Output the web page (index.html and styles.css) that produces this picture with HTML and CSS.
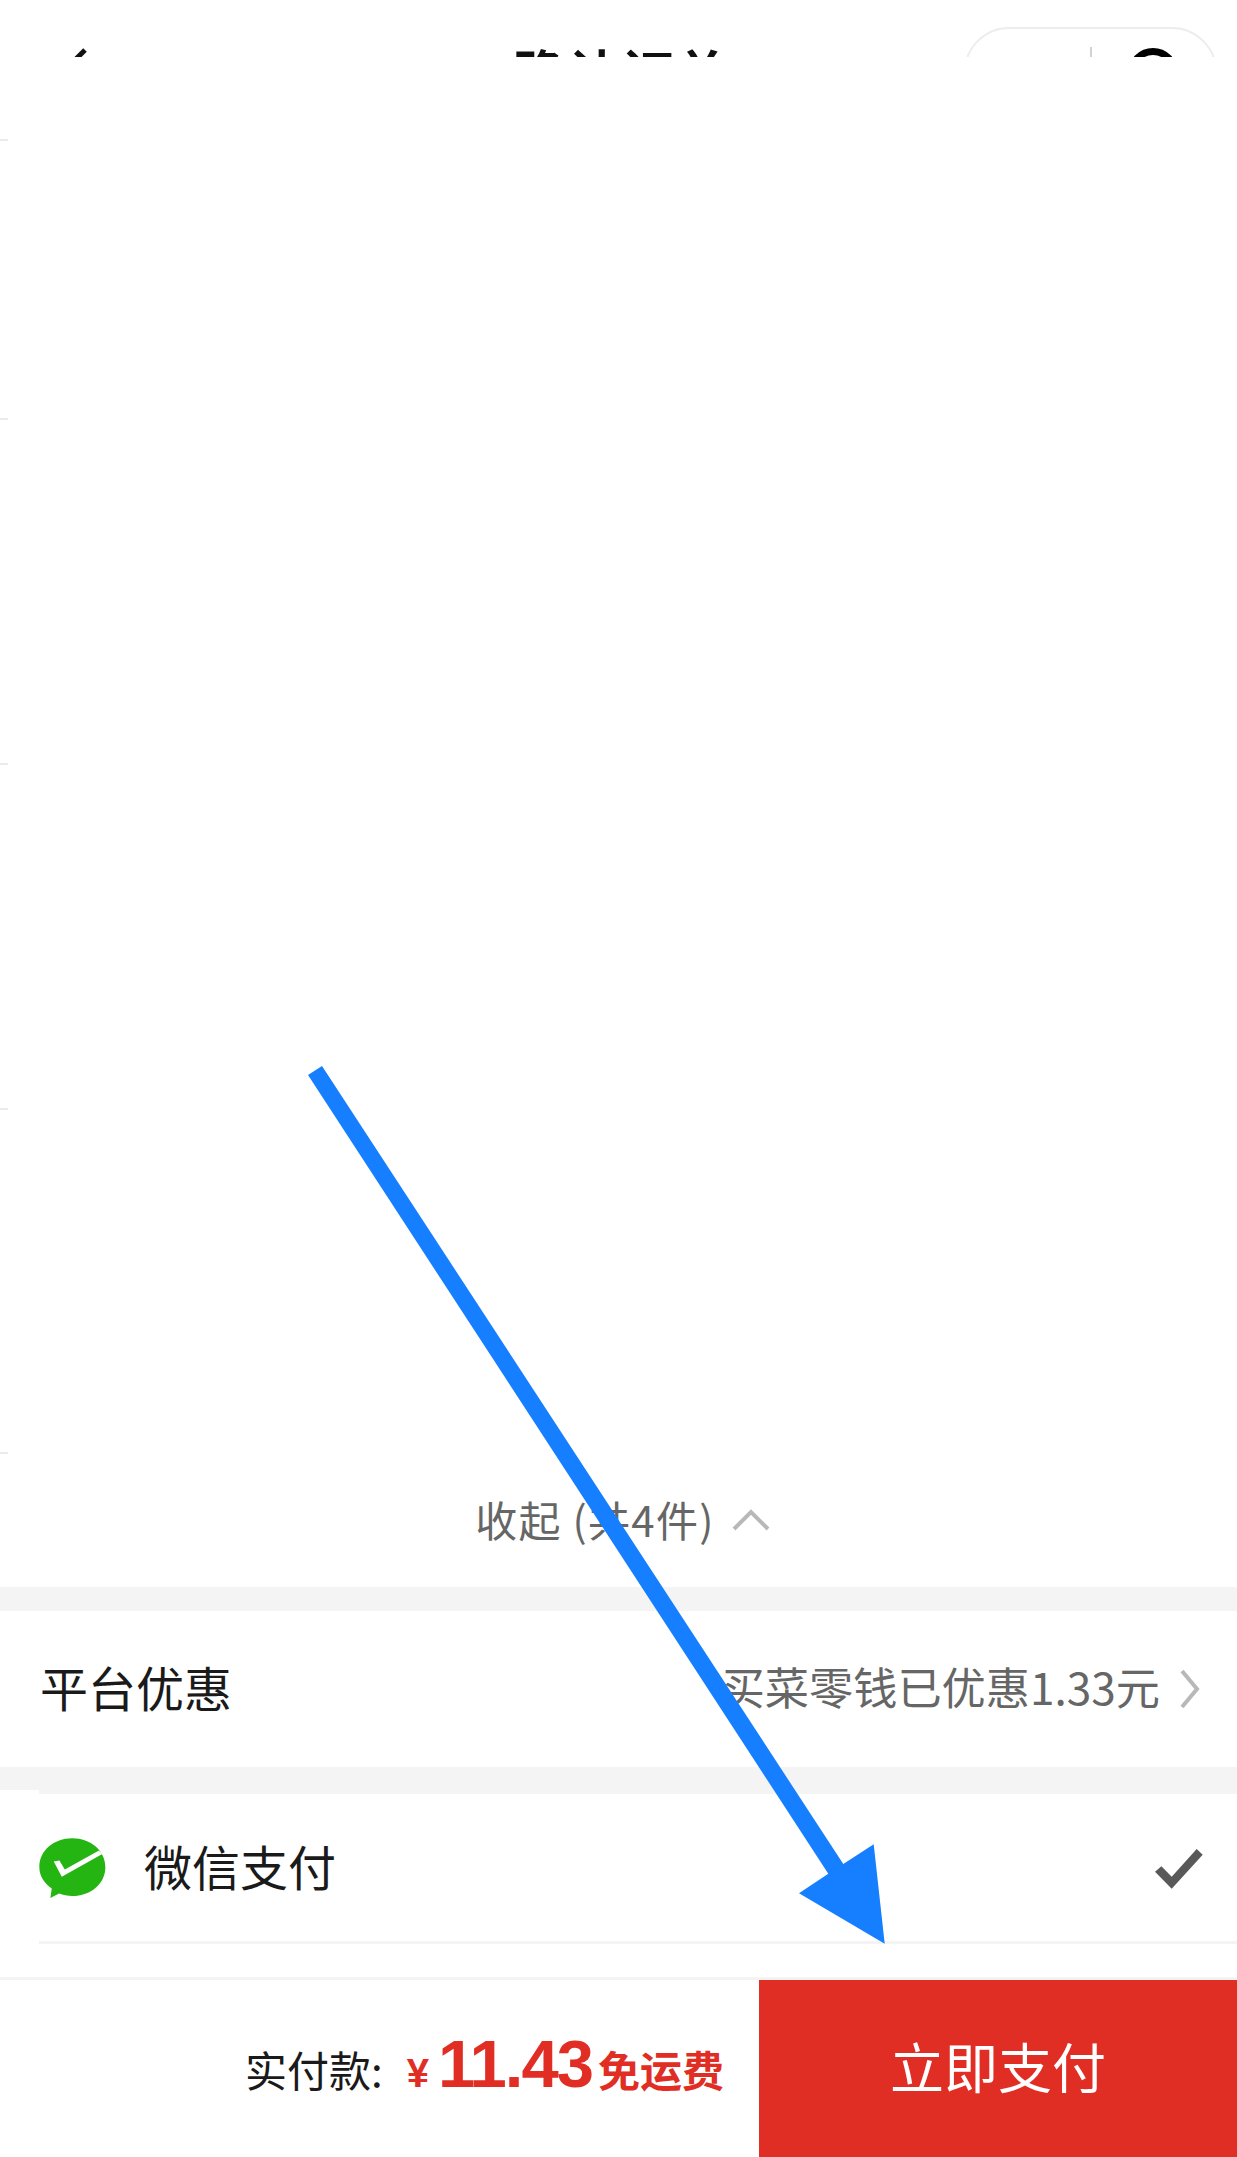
FILE: index.html
```html
<!DOCTYPE html>
<html lang="zh-CN">
<head>
<meta charset="utf-8">
<title>确认订单</title>
<link rel="stylesheet" href="styles.css">
</head>
<body>
<div class="page">
  <header class="topbar">
    <svg class="back" viewBox="0 0 30 30" aria-hidden="true"><path d="M25 2 L7 20 L25 38" /></svg>
    <h1 class="title">确认订单</h1>
    <div class="capsule">
      <div class="cap-seg"></div>
      <div class="cap-div"></div>
      <div class="cap-seg"><span class="cap-ring"></span></div>
    </div>
  </header>

  <section class="items">
    <div class="item item-first"><i class="tick"></i></div>
    <div class="item item-a"><i class="tick"></i></div>
    <div class="item item-b"><i class="tick"></i></div>
    <div class="item item-b"><i class="tick"></i></div>
    <div class="item item-c"><i class="tick"></i></div>
    <div class="collapse">
      <span class="collapse-text">收起 (共4件)</span>
      <svg class="chev-up" viewBox="0 0 38 22" aria-hidden="true"><path d="M2 20 L19 3 L36 20" /></svg>
    </div>
  </section>

  <div class="band band-a"></div>

  <section class="promo">
    <span class="label">平台优惠</span>
    <div class="promo-right">
      <span class="promo-text">买菜零钱已优惠1.33元</span>
      <svg class="chev-right" viewBox="0 0 20 38" aria-hidden="true"><path d="M2 1 L17 19 L2 37" /></svg>
    </div>
  </section>

  <div class="band band-b"></div>

  <section class="pay">
    <div class="pay-cap"></div>
    <div class="pay-row">
      <svg class="wechat" viewBox="117 117 200 185" aria-hidden="true">
        <path class="wx-bubble" d="M216 118 C272 118 315 155 315 204 C315 253 272 290 216 290 C202 290 189 288 177 283 L151 296 L155 268 C133 252 118 230 118 204 C118 155 161 118 216 118 Z" />
        <path class="wx-check" d="M161 187 L178 184 L194 211 L296 154 L306 165 L185 233 Z" />
      </svg>
      <span class="label">微信支付</span>
      <svg class="check" viewBox="0 0 48 40" aria-hidden="true"><path d="M0 22.7 L6.4 17.3 L16.7 27.7 L41.7 0 L47.7 5.7 L16.7 39.7 Z" /></svg>
    </div>
  </section>

  <div class="spacer"></div>

  <footer class="bottombar">
    <div class="total">
      <span class="total-label">实付款:</span>
      <span class="yen">¥</span>
      <span class="amount">11.43</span>
      <span class="freeship">免运费</span>
    </div>
    <button class="paybtn">立即支付</button>
  </footer>

  <svg class="arrow" viewBox="0 0 1237 2157" aria-hidden="true">
    <polygon points="308,1075 322,1066 843.3,1864 873.7,1844.3 884.7,1943.7 799,1893.3 828.3,1873.7" />
  </svg>
</div>
</body>
</html>
```

FILE: styles.css
```css
* { box-sizing: border-box; }
html, body { margin: 0; padding: 0; background: #fff; }
body { font-family: "Noto Sans CJK SC", "Liberation Sans", sans-serif; color: #1a1a1a; }
.page { position: relative; width: 1237px; height: 2157px; overflow: hidden; background: #fff; display: flex; flex-direction: column; }

.topbar { height: 57px; overflow: hidden; display: grid; grid-template-columns: 514px 210px 1fr; flex: none; }
.back { width: 30px; height: 30px; margin: 48px 0 0 60px; overflow: visible; }
.back path { fill: none; stroke: #111; stroke-width: 5; }
.title { margin: 0; padding-top: 41px; font-size: 51px; line-height: 60px; letter-spacing: 3px; font-weight: 700; color: #111; white-space: nowrap; }
.capsule { justify-self: end; width: 253px; height: 90px; margin: 27px 20px 0 0; border: 2px solid #ededed; border-radius: 45px; display: flex; align-items: flex-start; padding-top: 18px; }
.cap-seg { flex: 1; display: flex; justify-content: center; }
.cap-div { width: 2px; height: 50px; background: #d2d2d2; }
.cap-ring { display: block; width: 50px; height: 50px; margin-top: 1px; border: 7px solid #000; border-radius: 50%; }

.items { flex: none; }
.item { display: flex; align-items: flex-end; }
.item-first { height: 84px; }
.item-a { height: 279px; }
.item-b { height: 345px; }
.item-c { height: 344px; }
.tick { display: block; width: 8px; height: 2px; background: #ebebeb; }

.collapse { height: 133px; display: flex; align-items: center; justify-content: center; gap: 17px; padding-left: 8px; font-size: 42px; color: #666; }
.collapse-text { letter-spacing: 1.3px; margin-top: -5px; }
.chev-up { width: 38px; height: 22px; margin-top: -2px; }
.chev-up path, .chev-right path { fill: none; stroke: #b8b8b8; stroke-width: 4; }

.band { background: #f4f4f4; flex: none; }
.band-a { height: 24px; }
.band-b { height: 23px; }

.promo { height: 156px; flex: none; display: flex; align-items: center; justify-content: space-between; padding: 0 37px 0 40px; }
.label { font-size: 48px; color: #1a1a1a; margin-top: -6px; }
.promo-right { display: flex; align-items: center; gap: 20px; }
.promo-text { font-size: 44.2px; color: #666; margin-top: -6px; }
.chev-right { width: 20px; height: 38px; }

.pay { flex: none; padding-left: 39px; }
.pay-cap { height: 4px; background: #f4f4f4; }
.pay-row { height: 150px; display: flex; align-items: center; border-bottom: 3px solid #f4f4f4; padding-right: 34px; }
.wechat { width: 67px; height: 62px; margin-top: 2px; margin-right: 38px; flex: none; }
.wx-bubble { fill: #25b512; }
.wx-check { fill: #fff; }
.check { width: 48px; height: 40px; margin-left: auto; margin-top: 3px; }
.check path { fill: #595959; }

.spacer { height: 33px; flex: none; }

.bottombar { flex: 1; display: flex; border-top: 3px solid #f4f4f4; }
.total { flex: 1; display: flex; align-items: baseline; justify-content: flex-end; padding: 45px 35px 0 0; white-space: nowrap; }
.total-label { font-size: 42px; color: #1a1a1a; margin-right: 24px; }
.yen { font-family: "Liberation Sans", sans-serif; font-weight: 700; font-size: 40px; color: #e12e24; margin-right: 9px; }
.amount { font-family: "Liberation Sans", sans-serif; font-weight: 700; font-size: 67px; letter-spacing: -2px; color: #e12e24; margin-right: 6px; }
.freeship { font-size: 42px; font-weight: 700; color: #e12e24; }
.paybtn { width: 478px; border: 0; padding: 0 0 7px; background: #e12e24; color: #fff; font-family: inherit; font-size: 54px; }

.arrow { position: absolute; left: 0; top: 0; width: 1237px; height: 2157px; pointer-events: none; }
.arrow polygon { fill: #167fff; }
```
